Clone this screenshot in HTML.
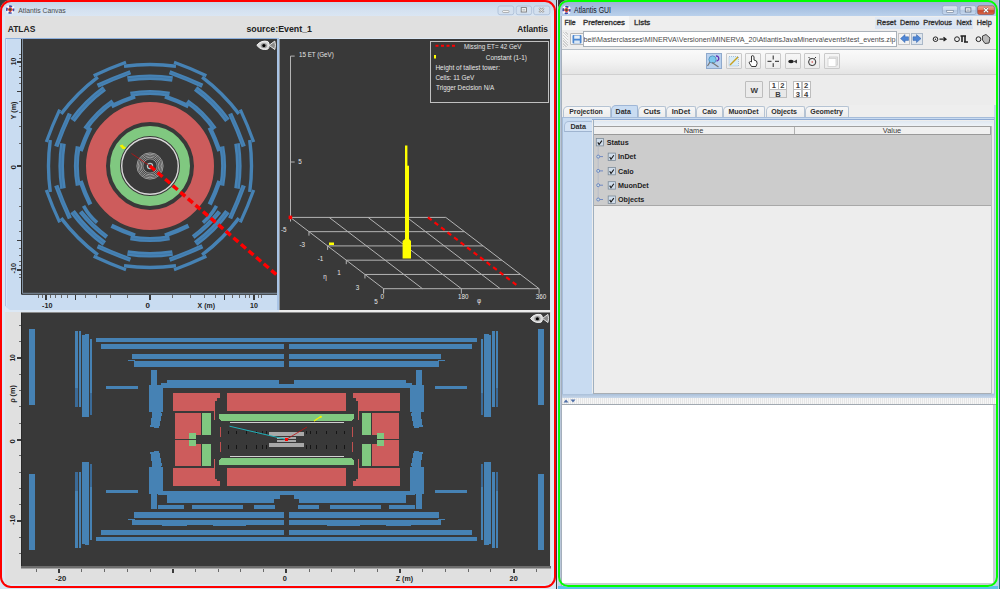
<!DOCTYPE html>
<html><head><meta charset="utf-8">
<style>
html,body{margin:0;padding:0;}
body{width:1000px;height:589px;position:relative;overflow:hidden;background:#3a3a3a;font-family:"Liberation Sans",sans-serif;}
.a{position:absolute;box-sizing:border-box;}
svg{position:absolute;left:0;top:0;overflow:visible;}
text{font-family:"Liberation Sans",sans-serif;}
</style></head><body>
<div class="a" style="left:0;top:570px;width:556px;height:19px;background:#d6e6f4"></div>
<div class="a" style="left:540px;top:0;width:16px;height:14px;background:#c4d4e6"></div>
<div class="a" style="left:557px;top:570px;width:25px;height:19px;background:#c4d2e6"></div>
<div class="a" style="left:980px;top:570px;width:18px;height:19px;background:#b8d0ee"></div>
<div class="a" style="left:982px;top:0;width:16px;height:14px;background:#b4c2d4"></div>
<div class="a" style="left:558px;top:586px;width:442px;height:3px;background:#5cc4e8"></div>
<div class="a" style="left:998px;top:0;width:1px;height:589px;background:#b8d0ee"></div><div class="a" style="left:999px;top:0;width:1px;height:589px;background:#226c7c"></div><div class="a" style="left:557px;top:0;width:1px;height:589px;background:#dcdcf2"></div>
<div class="a" style="left:0;top:0;width:556px;height:588px;border-radius:11px;background:linear-gradient(#c2d2e6,#d4e1f0 10px,#dae6f3 16px,#dce8f5 17px);"></div>
<div class="a" style="left:0;top:0;width:556px;height:588px;border:2px solid #ff0000;border-radius:11px;"></div>
<svg width="556" height="20">
<g transform="translate(10.2 9.6)"><circle r="4.6" fill="#f6f8fc"/><circle r="3.4" fill="none" stroke="#3a48a8" stroke-width="1.7" stroke-dasharray="3.2 2.14" stroke-dashoffset="1.6"/><path d="M0 -2.8 L2.8 0 L0 2.8 L-2.8 0 Z" fill="#e23a3a"/><circle r="1.1" fill="#146a3c"/></g>
<text x="18.2" y="12.9" font-size="7.9" fill="#4c4c4c" text-anchor="start" textLength="47.6" lengthAdjust="spacingAndGlyphs">Atlantis Canvas</text>
<rect x="498" y="6" width="15.8" height="8.7" rx="2" fill="#d3e0ef" stroke="#aabdd5" stroke-width="0.8"/>
<rect x="516.2" y="6" width="15.4" height="8.7" rx="2" fill="#d3e0ef" stroke="#aabdd5" stroke-width="0.8"/>
<rect x="533.7" y="6" width="16.1" height="8.7" rx="2" fill="#d3e0ef" stroke="#aabdd5" stroke-width="0.8"/>
<rect x="502.6" y="10.6" width="6.4" height="1.9" rx="0.8" fill="#fafafa" stroke="#8a8a8a" stroke-width="0.6"/>
<rect x="521.2" y="7.6" width="5.2" height="4.4" fill="#f8f8f8" stroke="#7a7a7a" stroke-width="0.9"/>
<rect x="522.4" y="9.4" width="2.8" height="1" fill="#9aa"/>
<path d="M539.2 8 L543.8 12.4 M543.8 8 L539.2 12.4" stroke="#8a8a8a" stroke-width="2"/>
<path d="M539.2 8 L543.8 12.4 M543.8 8 L539.2 12.4" stroke="#f4f4f4" stroke-width="1"/>
</svg>
<div class="a" style="left:5px;top:16px;width:545.6px;height:22px;background:#e0e0e0"></div>
<div class="a" style="left:5px;top:38px;width:274px;height:272.3px;background:#c9dcf1;clip-path:polygon(0 0,100% 0,100% 100%,5px 100%,0 calc(100% - 4px))"></div>
<div class="a" style="left:5px;top:38px;width:274px;height:1px;background:#8eb0dc"></div>
<div class="a" style="left:5px;top:38px;width:1px;height:268px;background:#adbde0"></div>
<div class="a" style="left:6px;top:39px;width:1px;height:267px;background:#d6e6f8"></div>
<div class="a" style="left:277px;top:38px;width:2px;height:272px;background:#a9c4e6"></div>
<div class="a" style="left:279px;top:310px;width:271.6px;height:2.3px;background:#ececec"></div>
<div class="a" style="left:5px;top:312px;width:545.6px;height:271.5px;background:#e0e0e0"></div>
<svg width="556" height="40">
<text x="7.7" y="32" font-size="9.2" fill="#222" font-weight="bold" text-anchor="start" textLength="27.6" lengthAdjust="spacingAndGlyphs">ATLAS</text>
<text x="246.4" y="32" font-size="9.2" fill="#222" font-weight="bold" text-anchor="start" textLength="65.6" lengthAdjust="spacingAndGlyphs">source:Event_1</text>
<text x="548" y="32" font-size="9.2" fill="#222" font-weight="bold" text-anchor="end" textLength="30.7" lengthAdjust="spacingAndGlyphs">Atlantis</text>
</svg>
<svg width="556" height="589" style="left:0;top:0">
<defs><clipPath id="c1"><rect x="22" y="39" width="255" height="255"/></clipPath></defs>
<rect x="22" y="39" width="255" height="255" fill="#393939"/>
<g clip-path="url(#c1)">
<path d="M249.7 140 A188.68 188.68 0 0 1 249.7 192" fill="none" stroke="#4682b4" stroke-width="3.4"/>
<path d="M240.31 109.65 A383.01 383.01 0 0 1 253.7 141.99" fill="none" stroke="#4682b4" stroke-width="3.2"/>
<path d="M202.11 77.12 A188.68 188.68 0 0 1 238.88 113.89" fill="none" stroke="#4682b4" stroke-width="3.4"/>
<path d="M174.01 62.3 A383.01 383.01 0 0 1 206.35 75.69" fill="none" stroke="#4682b4" stroke-width="3.2"/>
<path d="M124 66.3 A188.68 188.68 0 0 1 176 66.3" fill="none" stroke="#4682b4" stroke-width="3.4"/>
<path d="M93.65 75.69 A383.01 383.01 0 0 1 125.99 62.3" fill="none" stroke="#4682b4" stroke-width="3.2"/>
<path d="M61.12 113.89 A188.68 188.68 0 0 1 97.89 77.12" fill="none" stroke="#4682b4" stroke-width="3.4"/>
<path d="M46.3 141.99 A383.01 383.01 0 0 1 59.69 109.65" fill="none" stroke="#4682b4" stroke-width="3.2"/>
<path d="M50.3 192 A188.68 188.68 0 0 1 50.3 140" fill="none" stroke="#4682b4" stroke-width="3.4"/>
<path d="M59.69 222.35 A383.01 383.01 0 0 1 46.3 190.01" fill="none" stroke="#4682b4" stroke-width="3.2"/>
<path d="M97.89 254.88 A188.68 188.68 0 0 1 61.12 218.11" fill="none" stroke="#4682b4" stroke-width="3.4"/>
<path d="M125.99 269.7 A383.01 383.01 0 0 1 93.65 256.31" fill="none" stroke="#4682b4" stroke-width="3.2"/>
<path d="M176 265.7 A188.68 188.68 0 0 1 124 265.7" fill="none" stroke="#4682b4" stroke-width="3.4"/>
<path d="M206.35 256.31 A383.01 383.01 0 0 1 174.01 269.7" fill="none" stroke="#4682b4" stroke-width="3.2"/>
<path d="M238.88 218.11 A188.68 188.68 0 0 1 202.11 254.88" fill="none" stroke="#4682b4" stroke-width="3.4"/>
<path d="M253.7 190.01 A383.01 383.01 0 0 1 240.31 222.35" fill="none" stroke="#4682b4" stroke-width="3.2"/>
<path d="M237 143.5 A141.53 141.53 0 0 1 237 188.5" fill="none" stroke="#4682b4" stroke-width="5.6"/>
<path d="M237.2 143.5 A141.53 141.53 0 0 1 237.2 188.5" fill="none" stroke="#3a6a98" stroke-width="0.5"/>
<path d="M230.14 113.59 A394.03 394.03 0 0 1 243.73 146.39" fill="none" stroke="#4682b4" stroke-width="4.4"/>
<path d="M230.14 113.59 A394.03 394.03 0 0 1 243.73 146.39" fill="none" stroke="#3d6d9b" stroke-width="0.4"/>
<path d="M195.61 88.57 A141.53 141.53 0 0 1 227.43 120.39" fill="none" stroke="#4682b4" stroke-width="5.6"/>
<path d="M195.75 88.43 A141.53 141.53 0 0 1 227.57 120.25" fill="none" stroke="#3a6a98" stroke-width="0.5"/>
<path d="M169.61 72.27 A394.03 394.03 0 0 1 202.41 85.86" fill="none" stroke="#4682b4" stroke-width="4.4"/>
<path d="M169.61 72.27 A394.03 394.03 0 0 1 202.41 85.86" fill="none" stroke="#3d6d9b" stroke-width="0.4"/>
<path d="M127.5 79 A141.53 141.53 0 0 1 172.5 79" fill="none" stroke="#4682b4" stroke-width="5.6"/>
<path d="M127.5 78.8 A141.53 141.53 0 0 1 172.5 78.8" fill="none" stroke="#3a6a98" stroke-width="0.5"/>
<path d="M97.59 85.86 A394.03 394.03 0 0 1 130.39 72.27" fill="none" stroke="#4682b4" stroke-width="4.4"/>
<path d="M97.59 85.86 A394.03 394.03 0 0 1 130.39 72.27" fill="none" stroke="#3d6d9b" stroke-width="0.4"/>
<path d="M72.57 120.39 A141.53 141.53 0 0 1 104.39 88.57" fill="none" stroke="#4682b4" stroke-width="5.6"/>
<path d="M72.43 120.25 A141.53 141.53 0 0 1 104.25 88.43" fill="none" stroke="#3a6a98" stroke-width="0.5"/>
<path d="M56.27 146.39 A394.03 394.03 0 0 1 69.86 113.59" fill="none" stroke="#4682b4" stroke-width="4.4"/>
<path d="M56.27 146.39 A394.03 394.03 0 0 1 69.86 113.59" fill="none" stroke="#3d6d9b" stroke-width="0.4"/>
<path d="M63 188.5 A141.53 141.53 0 0 1 63 143.5" fill="none" stroke="#4682b4" stroke-width="5.6"/>
<path d="M62.8 188.5 A141.53 141.53 0 0 1 62.8 143.5" fill="none" stroke="#3a6a98" stroke-width="0.5"/>
<path d="M69.86 218.41 A394.03 394.03 0 0 1 56.27 185.61" fill="none" stroke="#4682b4" stroke-width="4.4"/>
<path d="M69.86 218.41 A394.03 394.03 0 0 1 56.27 185.61" fill="none" stroke="#3d6d9b" stroke-width="0.4"/>
<path d="M104.39 243.43 A141.53 141.53 0 0 1 72.57 211.61" fill="none" stroke="#4682b4" stroke-width="5.6"/>
<path d="M104.25 243.57 A141.53 141.53 0 0 1 72.43 211.75" fill="none" stroke="#3a6a98" stroke-width="0.5"/>
<path d="M130.39 259.73 A394.03 394.03 0 0 1 97.59 246.14" fill="none" stroke="#4682b4" stroke-width="4.4"/>
<path d="M130.39 259.73 A394.03 394.03 0 0 1 97.59 246.14" fill="none" stroke="#3d6d9b" stroke-width="0.4"/>
<path d="M172.5 253 A141.53 141.53 0 0 1 127.5 253" fill="none" stroke="#4682b4" stroke-width="5.6"/>
<path d="M172.5 253.2 A141.53 141.53 0 0 1 127.5 253.2" fill="none" stroke="#3a6a98" stroke-width="0.5"/>
<path d="M202.41 246.14 A394.03 394.03 0 0 1 169.61 259.73" fill="none" stroke="#4682b4" stroke-width="4.4"/>
<path d="M202.41 246.14 A394.03 394.03 0 0 1 169.61 259.73" fill="none" stroke="#3d6d9b" stroke-width="0.4"/>
<path d="M227.43 211.61 A141.53 141.53 0 0 1 195.61 243.43" fill="none" stroke="#4682b4" stroke-width="5.6"/>
<path d="M227.57 211.75 A141.53 141.53 0 0 1 195.75 243.57" fill="none" stroke="#3a6a98" stroke-width="0.5"/>
<path d="M243.73 185.61 A394.03 394.03 0 0 1 230.14 218.41" fill="none" stroke="#4682b4" stroke-width="4.4"/>
<path d="M243.73 185.61 A394.03 394.03 0 0 1 230.14 218.41" fill="none" stroke="#3d6d9b" stroke-width="0.4"/>
<path d="M221.8 146.5 A106.53 106.53 0 0 1 221.8 185.5" fill="none" stroke="#4682b4" stroke-width="5"/>
<path d="M221.9 146.5 A106.53 106.53 0 0 1 221.9 185.5" fill="none" stroke="#3d6d9b" stroke-width="0.4"/>
<path d="M209.7 127.47 A203.4 203.4 0 0 1 219.46 151.03" fill="none" stroke="#4682b4" stroke-width="4.4"/>
<path d="M186.98 101.44 A106.53 106.53 0 0 1 214.56 129.02" fill="none" stroke="#4682b4" stroke-width="5"/>
<path d="M187.05 101.37 A106.53 106.53 0 0 1 214.63 128.95" fill="none" stroke="#3d6d9b" stroke-width="0.4"/>
<path d="M164.97 96.54 A203.4 203.4 0 0 1 188.53 106.3" fill="none" stroke="#4682b4" stroke-width="4.4"/>
<path d="M130.5 94.2 A106.53 106.53 0 0 1 169.5 94.2" fill="none" stroke="#4682b4" stroke-width="5"/>
<path d="M130.5 94.1 A106.53 106.53 0 0 1 169.5 94.1" fill="none" stroke="#3d6d9b" stroke-width="0.4"/>
<path d="M111.47 106.3 A203.4 203.4 0 0 1 135.03 96.54" fill="none" stroke="#4682b4" stroke-width="4.4"/>
<path d="M85.44 129.02 A106.53 106.53 0 0 1 113.02 101.44" fill="none" stroke="#4682b4" stroke-width="5"/>
<path d="M85.37 128.95 A106.53 106.53 0 0 1 112.95 101.37" fill="none" stroke="#3d6d9b" stroke-width="0.4"/>
<path d="M80.54 151.03 A203.4 203.4 0 0 1 90.3 127.47" fill="none" stroke="#4682b4" stroke-width="4.4"/>
<path d="M78.2 185.5 A106.53 106.53 0 0 1 78.2 146.5" fill="none" stroke="#4682b4" stroke-width="5"/>
<path d="M78.1 185.5 A106.53 106.53 0 0 1 78.1 146.5" fill="none" stroke="#3d6d9b" stroke-width="0.4"/>
<path d="M90.3 204.53 A203.4 203.4 0 0 1 80.54 180.97" fill="none" stroke="#4682b4" stroke-width="4.4"/>
<path d="M97.08 222.69 A58.28 58.28 0 0 1 83.55 205.98" fill="none" stroke="#4682b4" stroke-width="3.6"/>
<path d="M106.86 236.94 A139.38 139.38 0 0 1 80.6 211.59" fill="none" stroke="#4682b4" stroke-width="4.4"/>
<path d="M106.79 237.02 A139.38 139.38 0 0 1 80.54 211.66" fill="none" stroke="#3d6d9b" stroke-width="0.4"/>
<path d="M135.03 235.46 A203.4 203.4 0 0 1 111.47 225.7" fill="none" stroke="#4682b4" stroke-width="4.4"/>
<path d="M169.5 237.8 A106.53 106.53 0 0 1 130.5 237.8" fill="none" stroke="#4682b4" stroke-width="5"/>
<path d="M169.5 237.9 A106.53 106.53 0 0 1 130.5 237.9" fill="none" stroke="#3d6d9b" stroke-width="0.4"/>
<path d="M188.53 225.7 A203.4 203.4 0 0 1 164.97 235.46" fill="none" stroke="#4682b4" stroke-width="4.4"/>
<path d="M216.45 205.98 A58.28 58.28 0 0 1 202.92 222.69" fill="none" stroke="#4682b4" stroke-width="3.6"/>
<path d="M219.4 211.59 A139.38 139.38 0 0 1 193.14 236.94" fill="none" stroke="#4682b4" stroke-width="4.4"/>
<path d="M219.46 211.66 A139.38 139.38 0 0 1 193.21 237.02" fill="none" stroke="#3d6d9b" stroke-width="0.4"/>
<path d="M219.46 180.97 A203.4 203.4 0 0 1 209.7 204.53" fill="none" stroke="#4682b4" stroke-width="4.4"/>
<circle cx="150" cy="166" r="54" fill="none" stroke="#cd5c5c" stroke-width="20"/>
<circle cx="150" cy="166" r="35" fill="none" stroke="#80c880" stroke-width="10"/>
<circle cx="150" cy="166" r="28.3" fill="none" stroke="#d8d8d8" stroke-width="1.4"/>
<circle cx="150" cy="166" r="7.2" fill="none" stroke="#bdbdbd" stroke-width="0.75"/>
<circle cx="150" cy="166" r="8.8" fill="none" stroke="#bdbdbd" stroke-width="0.75"/>
<circle cx="150" cy="166" r="10.3" fill="none" stroke="#bdbdbd" stroke-width="0.75"/>
<circle cx="150" cy="166" r="11.8" fill="none" stroke="#bdbdbd" stroke-width="0.75"/>
<circle cx="150" cy="166" r="13.1" fill="none" stroke="#bdbdbd" stroke-width="0.75"/>
<circle cx="150" cy="166" r="2.6" fill="none" stroke="#b8c8c8" stroke-width="1.2"/>
<line x1="150" y1="166" x2="131.5" y2="153.5" stroke="#c01010" stroke-width="0.8"/>
<path d="M119.5 145.5 l3 -1 l1.5 2 l2 0.5 l-1 2 l-2.5 0 z" fill="#f0f000"/>
<line x1="150" y1="166" x2="282.71" y2="280.08" stroke="#ff0000" stroke-width="3.5" stroke-dasharray="6.5 3.5"/>
</g><defs><clipPath id="c2"><rect x="279.5" y="39" width="270.5" height="271"/></clipPath></defs>
<rect x="279.5" y="39" width="270.5" height="271" fill="#393939"/>
<g clip-path="url(#c2)">
<line x1="290.3" y1="217.4" x2="445.8" y2="217.4" stroke="#b4b4b4" stroke-width="1"/>
<line x1="308.96" y1="231.66" x2="464.46" y2="231.66" stroke="#b4b4b4" stroke-width="1"/>
<line x1="327.62" y1="245.92" x2="483.12" y2="245.92" stroke="#b4b4b4" stroke-width="1"/>
<line x1="346.28" y1="260.18" x2="501.78" y2="260.18" stroke="#b4b4b4" stroke-width="1"/>
<line x1="364.94" y1="274.44" x2="520.44" y2="274.44" stroke="#b4b4b4" stroke-width="1"/>
<line x1="383.6" y1="288.7" x2="539.1" y2="288.7" stroke="#b4b4b4" stroke-width="1"/>
<line x1="290.3" y1="217.4" x2="383.6" y2="288.7" stroke="#b4b4b4" stroke-width="1"/>
<line x1="329.18" y1="217.4" x2="422.48" y2="288.7" stroke="#b4b4b4" stroke-width="1"/>
<line x1="368.05" y1="217.4" x2="461.35" y2="288.7" stroke="#b4b4b4" stroke-width="1"/>
<line x1="406.93" y1="217.4" x2="500.23" y2="288.7" stroke="#b4b4b4" stroke-width="1"/>
<line x1="445.8" y1="217.4" x2="539.1" y2="288.7" stroke="#b4b4b4" stroke-width="1"/>
<line x1="308.96" y1="231.66" x2="308.96" y2="235.66" stroke="#b4b4b4" stroke-width="1"/>
<line x1="327.62" y1="245.92" x2="327.62" y2="249.92" stroke="#b4b4b4" stroke-width="1"/>
<line x1="346.28" y1="260.18" x2="346.28" y2="264.18" stroke="#b4b4b4" stroke-width="1"/>
<line x1="364.94" y1="274.44" x2="364.94" y2="278.44" stroke="#b4b4b4" stroke-width="1"/>
<line x1="383.6" y1="288.7" x2="383.6" y2="292.7" stroke="#b4b4b4" stroke-width="1"/>
<line x1="383.6" y1="288.7" x2="383.6" y2="293.7" stroke="#b4b4b4" stroke-width="1"/>
<line x1="461.35" y1="288.7" x2="461.35" y2="293.7" stroke="#b4b4b4" stroke-width="1"/>
<line x1="539.1" y1="288.7" x2="539.1" y2="293.7" stroke="#b4b4b4" stroke-width="1"/>
<polyline points="290.5,217.4 290.5,56.1 294.7,56.1" fill="none" stroke="#b4b4b4" stroke-width="1"/>
<line x1="290.5" y1="162" x2="294.7" y2="162" stroke="#b4b4b4" stroke-width="1"/>
<line x1="290.5" y1="217.4" x2="290.5" y2="221.5" stroke="#b4b4b4" stroke-width="1"/>
<rect x="288.6" y="215.6" width="3.6" height="3.6" fill="#ff0000"/>
<line x1="428" y1="217.4" x2="517.6" y2="285.9" stroke="#ff0000" stroke-width="2.2" stroke-dasharray="4.6 3.6"/>
<rect x="405" y="145.5" width="2.4" height="100" fill="#ffff00"/>
<rect x="405" y="165.7" width="4" height="80" fill="#ffff00"/>
<path d="M402.6 258.6 L402.6 241 L405 239 L409 239 L411 241 L411 258.6 Z" fill="#ffff00"/>
<rect x="329" y="242.5" width="5" height="2.5" fill="#ffff00"/>
<rect x="430.5" y="41.5" width="118" height="61" fill="none" stroke="#c0c0c0" stroke-width="1"/>
<line x1="435.5" y1="45.8" x2="457" y2="45.8" stroke="#ff0000" stroke-width="2" stroke-dasharray="3 2.5"/>
<rect x="434" y="55" width="2" height="3.5" fill="#ffff00"/>
<text x="299" y="57" font-size="7" fill="#e6e6e6" text-anchor="start" textLength="34.8" lengthAdjust="spacingAndGlyphs">15 ET (GeV)</text>
<text x="298.3" y="163.5" font-size="6.3" fill="#e6e6e6" text-anchor="start">5</text>
<text x="435.4" y="49" font-size="7" fill="#e6e6e6" text-anchor="start"></text>
<text x="464" y="49.2" font-size="7" fill="#e6e6e6" text-anchor="start" textLength="57.5" lengthAdjust="spacingAndGlyphs">Missing ET= 42 GeV</text>
<text x="485.8" y="59.7" font-size="7" fill="#e6e6e6" text-anchor="start" textLength="41.2" lengthAdjust="spacingAndGlyphs">Constant (1-1)</text>
<text x="435.4" y="70" font-size="7" fill="#e6e6e6" text-anchor="start" textLength="64.6" lengthAdjust="spacingAndGlyphs">Height of tallest tower:</text>
<text x="435.4" y="79.8" font-size="7" fill="#e6e6e6" text-anchor="start" textLength="39" lengthAdjust="spacingAndGlyphs">Cells: 11 GeV</text>
<text x="436" y="90.2" font-size="7" fill="#e6e6e6" text-anchor="start" textLength="58.2" lengthAdjust="spacingAndGlyphs">Trigger Decision N/A</text>
<text x="283.8" y="232.3" font-size="6.3" fill="#e6e6e6" text-anchor="middle">-5</text>
<text x="302.3" y="246.5" font-size="6.3" fill="#e6e6e6" text-anchor="middle">-3</text>
<text x="320.5" y="261" font-size="6.3" fill="#e6e6e6" text-anchor="middle">-1</text>
<text x="339" y="275.2" font-size="6.3" fill="#e6e6e6" text-anchor="middle">1</text>
<text x="357.5" y="289.5" font-size="6.3" fill="#e6e6e6" text-anchor="middle">3</text>
<text x="376" y="303.5" font-size="6.3" fill="#e6e6e6" text-anchor="middle">5</text>
<text x="325" y="279.3" font-size="6.3" fill="#e6e6e6" text-anchor="middle">η</text>
<text x="382.2" y="299.3" font-size="6.3" fill="#e6e6e6" text-anchor="middle">0</text>
<text x="463.3" y="299.3" font-size="6.3" fill="#e6e6e6" text-anchor="middle">180</text>
<text x="541" y="299.3" font-size="6.3" fill="#e6e6e6" text-anchor="middle">360</text>
<text x="479" y="303.3" font-size="6.3" fill="#e6e6e6" text-anchor="middle">φ</text>
</g><defs><clipPath id="c3"><rect x="22" y="312.5" width="528" height="253.5"/></clipPath></defs>
<rect x="22" y="312.5" width="528" height="253.5" fill="#393939"/>
<g clip-path="url(#c3)" shape-rendering="crispEdges">
<g><rect x="29.3" y="329.2" width="5.7" height="75.9" fill="#4682b4"/>
<rect x="75" y="331.4" width="2.5" height="56.6" fill="#4682b4"/>
<rect x="75" y="388" width="2.5" height="18.9" fill="#3b6b98"/>
<rect x="78.5" y="331.4" width="2.5" height="75.9" fill="#4682b4"/>
<path d="M81.8 335 L84.5 335 L84.5 333.6 L88.9 333.6 L88.9 416.8 L81.8 416.8 Z" fill="#4682b4"/>
<rect x="89.7" y="338.9" width="2.7" height="53.6" fill="#4682b4"/>
<rect x="89.7" y="392.5" width="2.7" height="22.8" fill="#3b6b98"/>
<rect x="101" y="344.3" width="182.8" height="4.4" fill="#4682b4"/>
<rect x="131.8" y="354.4" width="152" height="4.4" fill="#4682b4"/>
<rect x="162" y="353.5" width="25.4" height="1.5" fill="#4682b4"/>
<rect x="212.8" y="353.5" width="33.1" height="1.5" fill="#4682b4"/>
<rect x="128" y="359.5" width="7" height="1" fill="#4682b4"/>
<rect x="134" y="361" width="149.8" height="5.9" fill="#4682b4"/>
<rect x="106.1" y="386.4" width="31.5" height="2.2" fill="#4682b4"/>
<rect x="150.6" y="370.2" width="6.8" height="15.4" fill="#4682b4"/>
<rect x="149.2" y="385.2" width="13.6" height="26.5" fill="#4682b4"/>
<path d="M162.1 412.6 L152.6 411.2 L150.3 426.5 L159 428.6 Z" fill="#4682b4"/>
<path d="M173 393 L219.6 393 L219.6 398 L216.6 398 L216.6 400.5 L215 400.5 L215 411 L173 411 Z" fill="#cd5c5c"/>
<path d="M174.5 413.1 L201.3 413.1 L201.3 435.4 L196 435.4 L196 439 L174.5 439 Z" fill="#cd5c5c"/>
<rect x="213.8" y="411" width="1.2" height="9" fill="#cd5c5c"/>
<rect x="202" y="413" width="9.2" height="22.4" fill="#80c880"/>
<rect x="189" y="432.7" width="7" height="6.3" fill="#80c880"/>
<rect x="228" y="430.5" width="1.2" height="3.5" fill="#151515"/>
<rect x="236" y="430.5" width="1.2" height="3.5" fill="#151515"/>
<rect x="246" y="430.5" width="1.2" height="3.5" fill="#151515"/>
<rect x="256" y="430.5" width="1.2" height="3.5" fill="#151515"/>
<rect x="262" y="430.5" width="1.2" height="3.5" fill="#151515"/>
<rect x="266" y="430.5" width="1.2" height="3.5" fill="#151515"/>
<rect x="220" y="427" width="1" height="10" fill="#c05050"/></g>
<g transform="translate(573 0) scale(-1 1)"><rect x="29.3" y="329.2" width="5.7" height="75.9" fill="#4682b4"/>
<rect x="75" y="331.4" width="2.5" height="56.6" fill="#4682b4"/>
<rect x="75" y="388" width="2.5" height="18.9" fill="#3b6b98"/>
<rect x="78.5" y="331.4" width="2.5" height="75.9" fill="#4682b4"/>
<path d="M81.8 335 L84.5 335 L84.5 333.6 L88.9 333.6 L88.9 416.8 L81.8 416.8 Z" fill="#4682b4"/>
<rect x="89.7" y="338.9" width="2.7" height="53.6" fill="#4682b4"/>
<rect x="89.7" y="392.5" width="2.7" height="22.8" fill="#3b6b98"/>
<rect x="101" y="344.3" width="182.8" height="4.4" fill="#4682b4"/>
<rect x="131.8" y="354.4" width="152" height="4.4" fill="#4682b4"/>
<rect x="162" y="353.5" width="25.4" height="1.5" fill="#4682b4"/>
<rect x="212.8" y="353.5" width="33.1" height="1.5" fill="#4682b4"/>
<rect x="128" y="359.5" width="7" height="1" fill="#4682b4"/>
<rect x="134" y="361" width="149.8" height="5.9" fill="#4682b4"/>
<rect x="106.1" y="386.4" width="31.5" height="2.2" fill="#4682b4"/>
<rect x="150.6" y="370.2" width="6.8" height="15.4" fill="#4682b4"/>
<rect x="149.2" y="385.2" width="13.6" height="26.5" fill="#4682b4"/>
<path d="M162.1 412.6 L152.6 411.2 L150.3 426.5 L159 428.6 Z" fill="#4682b4"/>
<path d="M173 393 L219.6 393 L219.6 398 L216.6 398 L216.6 400.5 L215 400.5 L215 411 L173 411 Z" fill="#cd5c5c"/>
<path d="M174.5 413.1 L201.3 413.1 L201.3 435.4 L196 435.4 L196 439 L174.5 439 Z" fill="#cd5c5c"/>
<rect x="213.8" y="411" width="1.2" height="9" fill="#cd5c5c"/>
<rect x="202" y="413" width="9.2" height="22.4" fill="#80c880"/>
<rect x="189" y="432.7" width="7" height="6.3" fill="#80c880"/>
<rect x="228" y="430.5" width="1.2" height="3.5" fill="#151515"/>
<rect x="236" y="430.5" width="1.2" height="3.5" fill="#151515"/>
<rect x="246" y="430.5" width="1.2" height="3.5" fill="#151515"/>
<rect x="256" y="430.5" width="1.2" height="3.5" fill="#151515"/>
<rect x="262" y="430.5" width="1.2" height="3.5" fill="#151515"/>
<rect x="266" y="430.5" width="1.2" height="3.5" fill="#151515"/>
<rect x="220" y="427" width="1" height="10" fill="#c05050"/></g>
<g transform="translate(0 879) scale(1 -1)"><rect x="29.3" y="329.2" width="5.7" height="75.9" fill="#4682b4"/>
<rect x="75" y="331.4" width="2.5" height="56.6" fill="#4682b4"/>
<rect x="75" y="388" width="2.5" height="18.9" fill="#3b6b98"/>
<rect x="78.5" y="331.4" width="2.5" height="75.9" fill="#4682b4"/>
<path d="M81.8 335 L84.5 335 L84.5 333.6 L88.9 333.6 L88.9 416.8 L81.8 416.8 Z" fill="#4682b4"/>
<rect x="89.7" y="338.9" width="2.7" height="53.6" fill="#4682b4"/>
<rect x="89.7" y="392.5" width="2.7" height="22.8" fill="#3b6b98"/>
<rect x="101" y="344.3" width="182.8" height="4.4" fill="#4682b4"/>
<rect x="131.8" y="354.4" width="152" height="4.4" fill="#4682b4"/>
<rect x="162" y="353.5" width="25.4" height="1.5" fill="#4682b4"/>
<rect x="212.8" y="353.5" width="33.1" height="1.5" fill="#4682b4"/>
<rect x="128" y="359.5" width="7" height="1" fill="#4682b4"/>
<rect x="134" y="361" width="149.8" height="5.9" fill="#4682b4"/>
<rect x="106.1" y="386.4" width="31.5" height="2.2" fill="#4682b4"/>
<rect x="150.6" y="370.2" width="6.8" height="15.4" fill="#4682b4"/>
<rect x="149.2" y="385.2" width="13.6" height="26.5" fill="#4682b4"/>
<path d="M162.1 412.6 L152.6 411.2 L150.3 426.5 L159 428.6 Z" fill="#4682b4"/>
<path d="M173 393 L219.6 393 L219.6 398 L216.6 398 L216.6 400.5 L215 400.5 L215 411 L173 411 Z" fill="#cd5c5c"/>
<path d="M174.5 413.1 L201.3 413.1 L201.3 435.4 L196 435.4 L196 439 L174.5 439 Z" fill="#cd5c5c"/>
<rect x="213.8" y="411" width="1.2" height="9" fill="#cd5c5c"/>
<rect x="202" y="413" width="9.2" height="22.4" fill="#80c880"/>
<rect x="189" y="432.7" width="7" height="6.3" fill="#80c880"/>
<rect x="228" y="430.5" width="1.2" height="3.5" fill="#151515"/>
<rect x="236" y="430.5" width="1.2" height="3.5" fill="#151515"/>
<rect x="246" y="430.5" width="1.2" height="3.5" fill="#151515"/>
<rect x="256" y="430.5" width="1.2" height="3.5" fill="#151515"/>
<rect x="262" y="430.5" width="1.2" height="3.5" fill="#151515"/>
<rect x="266" y="430.5" width="1.2" height="3.5" fill="#151515"/>
<rect x="220" y="427" width="1" height="10" fill="#c05050"/></g>
<g transform="translate(573 879) scale(-1 -1)"><rect x="29.3" y="329.2" width="5.7" height="75.9" fill="#4682b4"/>
<rect x="75" y="331.4" width="2.5" height="56.6" fill="#4682b4"/>
<rect x="75" y="388" width="2.5" height="18.9" fill="#3b6b98"/>
<rect x="78.5" y="331.4" width="2.5" height="75.9" fill="#4682b4"/>
<path d="M81.8 335 L84.5 335 L84.5 333.6 L88.9 333.6 L88.9 416.8 L81.8 416.8 Z" fill="#4682b4"/>
<rect x="89.7" y="338.9" width="2.7" height="53.6" fill="#4682b4"/>
<rect x="89.7" y="392.5" width="2.7" height="22.8" fill="#3b6b98"/>
<rect x="101" y="344.3" width="182.8" height="4.4" fill="#4682b4"/>
<rect x="131.8" y="354.4" width="152" height="4.4" fill="#4682b4"/>
<rect x="162" y="353.5" width="25.4" height="1.5" fill="#4682b4"/>
<rect x="212.8" y="353.5" width="33.1" height="1.5" fill="#4682b4"/>
<rect x="128" y="359.5" width="7" height="1" fill="#4682b4"/>
<rect x="134" y="361" width="149.8" height="5.9" fill="#4682b4"/>
<rect x="106.1" y="386.4" width="31.5" height="2.2" fill="#4682b4"/>
<rect x="150.6" y="370.2" width="6.8" height="15.4" fill="#4682b4"/>
<rect x="149.2" y="385.2" width="13.6" height="26.5" fill="#4682b4"/>
<path d="M162.1 412.6 L152.6 411.2 L150.3 426.5 L159 428.6 Z" fill="#4682b4"/>
<path d="M173 393 L219.6 393 L219.6 398 L216.6 398 L216.6 400.5 L215 400.5 L215 411 L173 411 Z" fill="#cd5c5c"/>
<path d="M174.5 413.1 L201.3 413.1 L201.3 435.4 L196 435.4 L196 439 L174.5 439 Z" fill="#cd5c5c"/>
<rect x="213.8" y="411" width="1.2" height="9" fill="#cd5c5c"/>
<rect x="202" y="413" width="9.2" height="22.4" fill="#80c880"/>
<rect x="189" y="432.7" width="7" height="6.3" fill="#80c880"/>
<rect x="228" y="430.5" width="1.2" height="3.5" fill="#151515"/>
<rect x="236" y="430.5" width="1.2" height="3.5" fill="#151515"/>
<rect x="246" y="430.5" width="1.2" height="3.5" fill="#151515"/>
<rect x="256" y="430.5" width="1.2" height="3.5" fill="#151515"/>
<rect x="262" y="430.5" width="1.2" height="3.5" fill="#151515"/>
<rect x="266" y="430.5" width="1.2" height="3.5" fill="#151515"/>
<rect x="220" y="427" width="1" height="10" fill="#c05050"/></g>
<g><rect x="96.1" y="337.9" width="380.8" height="4" fill="#4682b4"/>
<rect x="227" y="393" width="119" height="18" fill="#cd5c5c"/>
<path d="M218.8 414 L354.2 414 L354.2 418.2 L351.5 420.7 L221.5 420.7 L218.8 418.2 Z" fill="#80c880"/>
<rect x="229.5" y="422.2" width="114" height="1.1" fill="#d0d0d0"/>
<rect x="269.3" y="431.9" width="34.4" height="3.8" fill="#a8a8a8"/>
<rect x="277" y="437.2" width="19" height="1.4" fill="#a8a8a8"/></g>
<g transform="translate(0 879) scale(1 -1)"><rect x="96.1" y="337.9" width="380.8" height="4" fill="#4682b4"/>
<rect x="227" y="393" width="119" height="18" fill="#cd5c5c"/>
<path d="M218.8 414 L354.2 414 L354.2 418.2 L351.5 420.7 L221.5 420.7 L218.8 418.2 Z" fill="#80c880"/>
<rect x="229.5" y="422.2" width="114" height="1.1" fill="#d0d0d0"/>
<rect x="269.3" y="431.9" width="34.4" height="3.8" fill="#a8a8a8"/>
<rect x="277" y="437.2" width="19" height="1.4" fill="#a8a8a8"/></g>
<path d="M167 380.2 L278.7 380.2 L278.7 384 L293.7 384 L293.7 380.2 L405.8 380.2 L405.8 383 L412 383 L412 388.1 L161 388.1 L161 383 L167 383 Z" fill="#4682b4"/>
<path d="M157.7 491 L415.3 491 L415.3 495 L406.2 495 L406.2 503 L298.8 503 L298.8 499.2 L293.6 499.2 L293.6 494.8 L279.6 494.8 L279.6 499.2 L274 499.2 L274 503 L166.8 503 L166.8 495 L157.7 495 Z" fill="#4682b4"/>
<rect x="157.7" y="505.2" width="25.9" height="4.2" fill="#4682b4"/>
<rect x="389.4" y="505.2" width="25.9" height="4.2" fill="#4682b4"/>
<rect x="192" y="505.2" width="51.1" height="4.2" fill="#4682b4"/>
<rect x="329.9" y="505.2" width="51.1" height="4.2" fill="#4682b4"/>
<rect x="254.3" y="505.2" width="20.3" height="4.2" fill="#4682b4"/>
<rect x="298.4" y="505.2" width="20.3" height="4.2" fill="#4682b4"/>
</g><g clip-path="url(#c3)">
<line x1="229.5" y1="426.2" x2="286.5" y2="439.5" stroke="#20b0b8" stroke-width="1"/>
<line x1="287" y1="439" x2="307" y2="427" stroke="#c01010" stroke-width="0.8"/>
<rect x="285" y="438" width="3" height="3" fill="#ff0000"/>
<path d="M314.5 420.8 L318.5 418 L320.6 416.8" fill="none" stroke="#f4f400" stroke-width="1.3" stroke-linecap="round"/><circle cx="320.8" cy="416.8" r="1.1" fill="#f4f400"/>
</g><polyline points="21.5,39 21.5,294.3 277,294.3" fill="none" stroke="#2a2a2a" stroke-width="1"/>
<polyline points="22.5,39 22.5,293.3 277,293.3" fill="none" stroke="#8090a0" stroke-width="1"/>
<line x1="16.5" y1="166" x2="21" y2="166" stroke="#3a3a3a" stroke-width="2" shape-rendering="crispEdges"/>
<line x1="18.7" y1="143.3" x2="21" y2="143.3" stroke="#6a6a6a" stroke-width="1" shape-rendering="crispEdges"/>
<line x1="18.7" y1="188.7" x2="21" y2="188.7" stroke="#6a6a6a" stroke-width="1" shape-rendering="crispEdges"/>
<line x1="18.7" y1="126" x2="21" y2="126" stroke="#6a6a6a" stroke-width="1" shape-rendering="crispEdges"/>
<line x1="18.7" y1="206" x2="21" y2="206" stroke="#6a6a6a" stroke-width="1" shape-rendering="crispEdges"/>
<line x1="18.7" y1="112" x2="21" y2="112" stroke="#6a6a6a" stroke-width="1" shape-rendering="crispEdges"/>
<line x1="18.7" y1="220" x2="21" y2="220" stroke="#6a6a6a" stroke-width="1" shape-rendering="crispEdges"/>
<line x1="18.7" y1="101" x2="21" y2="101" stroke="#6a6a6a" stroke-width="1" shape-rendering="crispEdges"/>
<line x1="18.7" y1="231" x2="21" y2="231" stroke="#6a6a6a" stroke-width="1" shape-rendering="crispEdges"/>
<line x1="16.5" y1="91.5" x2="21" y2="91.5" stroke="#3a3a3a" stroke-width="1.5" shape-rendering="crispEdges"/>
<line x1="16.5" y1="240.5" x2="21" y2="240.5" stroke="#3a3a3a" stroke-width="1.5" shape-rendering="crispEdges"/>
<line x1="18.7" y1="83.5" x2="21" y2="83.5" stroke="#6a6a6a" stroke-width="1" shape-rendering="crispEdges"/>
<line x1="18.7" y1="248.5" x2="21" y2="248.5" stroke="#6a6a6a" stroke-width="1" shape-rendering="crispEdges"/>
<line x1="18.7" y1="77" x2="21" y2="77" stroke="#6a6a6a" stroke-width="1" shape-rendering="crispEdges"/>
<line x1="18.7" y1="255" x2="21" y2="255" stroke="#6a6a6a" stroke-width="1" shape-rendering="crispEdges"/>
<line x1="18.7" y1="71" x2="21" y2="71" stroke="#6a6a6a" stroke-width="1" shape-rendering="crispEdges"/>
<line x1="18.7" y1="261" x2="21" y2="261" stroke="#6a6a6a" stroke-width="1" shape-rendering="crispEdges"/>
<line x1="18.7" y1="66.4" x2="21" y2="66.4" stroke="#6a6a6a" stroke-width="1" shape-rendering="crispEdges"/>
<line x1="18.7" y1="265.6" x2="21" y2="265.6" stroke="#6a6a6a" stroke-width="1" shape-rendering="crispEdges"/>
<line x1="16.5" y1="61.8" x2="21" y2="61.8" stroke="#3a3a3a" stroke-width="1.5" shape-rendering="crispEdges"/>
<line x1="16.5" y1="270.2" x2="21" y2="270.2" stroke="#3a3a3a" stroke-width="1.5" shape-rendering="crispEdges"/>
<line x1="18.7" y1="58" x2="21" y2="58" stroke="#6a6a6a" stroke-width="1" shape-rendering="crispEdges"/>
<line x1="18.7" y1="274" x2="21" y2="274" stroke="#6a6a6a" stroke-width="1" shape-rendering="crispEdges"/>
<line x1="18.7" y1="54.5" x2="21" y2="54.5" stroke="#6a6a6a" stroke-width="1" shape-rendering="crispEdges"/>
<line x1="18.7" y1="277.5" x2="21" y2="277.5" stroke="#6a6a6a" stroke-width="1" shape-rendering="crispEdges"/>
<line x1="150" y1="295" x2="150" y2="299.5" stroke="#3a3a3a" stroke-width="2" shape-rendering="crispEdges"/>
<line x1="127.3" y1="295" x2="127.3" y2="297.8" stroke="#6a6a6a" stroke-width="1" shape-rendering="crispEdges"/>
<line x1="172.7" y1="295" x2="172.7" y2="297.8" stroke="#6a6a6a" stroke-width="1" shape-rendering="crispEdges"/>
<line x1="110" y1="295" x2="110" y2="297.8" stroke="#6a6a6a" stroke-width="1" shape-rendering="crispEdges"/>
<line x1="190" y1="295" x2="190" y2="297.8" stroke="#6a6a6a" stroke-width="1" shape-rendering="crispEdges"/>
<line x1="96" y1="295" x2="96" y2="297.8" stroke="#6a6a6a" stroke-width="1" shape-rendering="crispEdges"/>
<line x1="204" y1="295" x2="204" y2="297.8" stroke="#6a6a6a" stroke-width="1" shape-rendering="crispEdges"/>
<line x1="85" y1="295" x2="85" y2="297.8" stroke="#6a6a6a" stroke-width="1" shape-rendering="crispEdges"/>
<line x1="215" y1="295" x2="215" y2="297.8" stroke="#6a6a6a" stroke-width="1" shape-rendering="crispEdges"/>
<line x1="75.5" y1="295" x2="75.5" y2="299.5" stroke="#3a3a3a" stroke-width="1.5" shape-rendering="crispEdges"/>
<line x1="224.5" y1="295" x2="224.5" y2="299.5" stroke="#3a3a3a" stroke-width="1.5" shape-rendering="crispEdges"/>
<line x1="67.5" y1="295" x2="67.5" y2="297.8" stroke="#6a6a6a" stroke-width="1" shape-rendering="crispEdges"/>
<line x1="232.5" y1="295" x2="232.5" y2="297.8" stroke="#6a6a6a" stroke-width="1" shape-rendering="crispEdges"/>
<line x1="61" y1="295" x2="61" y2="297.8" stroke="#6a6a6a" stroke-width="1" shape-rendering="crispEdges"/>
<line x1="239" y1="295" x2="239" y2="297.8" stroke="#6a6a6a" stroke-width="1" shape-rendering="crispEdges"/>
<line x1="55" y1="295" x2="55" y2="297.8" stroke="#6a6a6a" stroke-width="1" shape-rendering="crispEdges"/>
<line x1="245" y1="295" x2="245" y2="297.8" stroke="#6a6a6a" stroke-width="1" shape-rendering="crispEdges"/>
<line x1="50.4" y1="295" x2="50.4" y2="297.8" stroke="#6a6a6a" stroke-width="1" shape-rendering="crispEdges"/>
<line x1="249.6" y1="295" x2="249.6" y2="297.8" stroke="#6a6a6a" stroke-width="1" shape-rendering="crispEdges"/>
<line x1="45.8" y1="295" x2="45.8" y2="299.5" stroke="#3a3a3a" stroke-width="1.5" shape-rendering="crispEdges"/>
<line x1="254.2" y1="295" x2="254.2" y2="299.5" stroke="#3a3a3a" stroke-width="1.5" shape-rendering="crispEdges"/>
<line x1="42" y1="295" x2="42" y2="297.8" stroke="#6a6a6a" stroke-width="1" shape-rendering="crispEdges"/>
<line x1="258" y1="295" x2="258" y2="297.8" stroke="#6a6a6a" stroke-width="1" shape-rendering="crispEdges"/>
<line x1="38.5" y1="295" x2="38.5" y2="297.8" stroke="#6a6a6a" stroke-width="1" shape-rendering="crispEdges"/>
<line x1="261.5" y1="295" x2="261.5" y2="297.8" stroke="#6a6a6a" stroke-width="1" shape-rendering="crispEdges"/>
<text x="0" y="0" font-size="8" font-weight="bold" fill="#1e1e1e" text-anchor="middle" textLength="7.6" lengthAdjust="spacingAndGlyphs" transform="translate(15.6 61.5) rotate(-90)">10</text>
<text x="0" y="0" font-size="8" font-weight="bold" fill="#1e1e1e" text-anchor="middle" textLength="17.9" lengthAdjust="spacingAndGlyphs" transform="translate(15.6 110.5) rotate(-90)">Y (m)</text>
<text x="0" y="0" font-size="8" font-weight="bold" fill="#1e1e1e" text-anchor="middle" transform="translate(15.6 167.3) rotate(-90)">0</text>
<text x="0" y="0" font-size="8" font-weight="bold" fill="#1e1e1e" text-anchor="middle" textLength="10.4" lengthAdjust="spacingAndGlyphs" transform="translate(15.6 268.3) rotate(-90)">-10</text>
<text x="47.3" y="308" font-size="8" font-weight="bold" fill="#1e1e1e" text-anchor="middle" textLength="10.4" lengthAdjust="spacingAndGlyphs">-10</text>
<g transform="translate(256.3 40.3) scale(1)"><path d="M0.5 5 Q5 -0.5 11.5 1.2 Q13 2.5 12.8 5 Q13 7.5 11.5 8.8 Q5 10.5 0.5 5 Z" fill="#d8d8d8" stroke="#f4f4f4" stroke-width="1"/><ellipse cx="7.6" cy="5.2" rx="3.2" ry="2.6" fill="#9a9a9a"/><circle cx="7.6" cy="5.3" r="1.6" fill="#000"/><path d="M12.8 5 L18.5 0.8 Q19.8 5 18.5 9.2 Z" fill="#8a8a8a" stroke="#e8e8e8" stroke-width="1"/></g>
<g transform="translate(530 313.6) scale(0.97)"><path d="M0.5 5 Q5 -0.5 11.5 1.2 Q13 2.5 12.8 5 Q13 7.5 11.5 8.8 Q5 10.5 0.5 5 Z" fill="#d8d8d8" stroke="#f4f4f4" stroke-width="1"/><ellipse cx="7.6" cy="5.2" rx="3.2" ry="2.6" fill="#9a9a9a"/><circle cx="7.6" cy="5.3" r="1.6" fill="#000"/><path d="M12.8 5 L18.5 0.8 Q19.8 5 18.5 9.2 Z" fill="#8a8a8a" stroke="#e8e8e8" stroke-width="1"/></g>
<text x="147.8" y="308" font-size="8" font-weight="bold" fill="#1e1e1e" text-anchor="middle">0</text>
<text x="206.3" y="308" font-size="8" font-weight="bold" fill="#1e1e1e" text-anchor="middle" textLength="17.4" lengthAdjust="spacingAndGlyphs">X (m)</text>
<text x="254" y="308" font-size="8" font-weight="bold" fill="#1e1e1e" text-anchor="middle" textLength="7.9" lengthAdjust="spacingAndGlyphs">10</text>
<polyline points="21.5,312.5 21.5,566.5" fill="none" stroke="#2a2a2a" stroke-width="1"/>
<rect x="21" y="566" width="530" height="2.5" fill="#6e6e6e"/>
<line x1="18.8" y1="325.05" x2="21" y2="325.05" stroke="#6a6a6a" stroke-width="1" shape-rendering="crispEdges"/>
<line x1="18.8" y1="341.4" x2="21" y2="341.4" stroke="#6a6a6a" stroke-width="1" shape-rendering="crispEdges"/>
<line x1="16.7" y1="357.75" x2="21" y2="357.75" stroke="#3a3a3a" stroke-width="2" shape-rendering="crispEdges"/>
<line x1="18.8" y1="374.1" x2="21" y2="374.1" stroke="#6a6a6a" stroke-width="1" shape-rendering="crispEdges"/>
<line x1="18.8" y1="390.45" x2="21" y2="390.45" stroke="#6a6a6a" stroke-width="1" shape-rendering="crispEdges"/>
<line x1="18.8" y1="406.8" x2="21" y2="406.8" stroke="#6a6a6a" stroke-width="1" shape-rendering="crispEdges"/>
<line x1="18.8" y1="423.15" x2="21" y2="423.15" stroke="#6a6a6a" stroke-width="1" shape-rendering="crispEdges"/>
<line x1="16.7" y1="439.5" x2="21" y2="439.5" stroke="#3a3a3a" stroke-width="2" shape-rendering="crispEdges"/>
<line x1="18.8" y1="455.85" x2="21" y2="455.85" stroke="#6a6a6a" stroke-width="1" shape-rendering="crispEdges"/>
<line x1="18.8" y1="472.2" x2="21" y2="472.2" stroke="#6a6a6a" stroke-width="1" shape-rendering="crispEdges"/>
<line x1="18.8" y1="488.55" x2="21" y2="488.55" stroke="#6a6a6a" stroke-width="1" shape-rendering="crispEdges"/>
<line x1="18.8" y1="504.9" x2="21" y2="504.9" stroke="#6a6a6a" stroke-width="1" shape-rendering="crispEdges"/>
<line x1="16.7" y1="521.25" x2="21" y2="521.25" stroke="#3a3a3a" stroke-width="2" shape-rendering="crispEdges"/>
<line x1="18.8" y1="537.6" x2="21" y2="537.6" stroke="#6a6a6a" stroke-width="1" shape-rendering="crispEdges"/>
<line x1="18.8" y1="553.95" x2="21" y2="553.95" stroke="#6a6a6a" stroke-width="1" shape-rendering="crispEdges"/>
<line x1="36.48" y1="568.5" x2="36.48" y2="571.5" stroke="#6a6a6a" stroke-width="1" shape-rendering="crispEdges"/>
<line x1="59.2" y1="568.5" x2="59.2" y2="573" stroke="#3a3a3a" stroke-width="2" shape-rendering="crispEdges"/>
<line x1="81.92" y1="568.5" x2="81.92" y2="571.5" stroke="#6a6a6a" stroke-width="1" shape-rendering="crispEdges"/>
<line x1="104.64" y1="568.5" x2="104.64" y2="571.5" stroke="#6a6a6a" stroke-width="1" shape-rendering="crispEdges"/>
<line x1="127.36" y1="568.5" x2="127.36" y2="571.5" stroke="#6a6a6a" stroke-width="1" shape-rendering="crispEdges"/>
<line x1="150.08" y1="568.5" x2="150.08" y2="571.5" stroke="#6a6a6a" stroke-width="1" shape-rendering="crispEdges"/>
<line x1="172.8" y1="568.5" x2="172.8" y2="573" stroke="#3a3a3a" stroke-width="2" shape-rendering="crispEdges"/>
<line x1="195.52" y1="568.5" x2="195.52" y2="571.5" stroke="#6a6a6a" stroke-width="1" shape-rendering="crispEdges"/>
<line x1="218.24" y1="568.5" x2="218.24" y2="571.5" stroke="#6a6a6a" stroke-width="1" shape-rendering="crispEdges"/>
<line x1="240.96" y1="568.5" x2="240.96" y2="571.5" stroke="#6a6a6a" stroke-width="1" shape-rendering="crispEdges"/>
<line x1="263.68" y1="568.5" x2="263.68" y2="571.5" stroke="#6a6a6a" stroke-width="1" shape-rendering="crispEdges"/>
<line x1="286.4" y1="568.5" x2="286.4" y2="573" stroke="#3a3a3a" stroke-width="2" shape-rendering="crispEdges"/>
<line x1="309.12" y1="568.5" x2="309.12" y2="571.5" stroke="#6a6a6a" stroke-width="1" shape-rendering="crispEdges"/>
<line x1="331.84" y1="568.5" x2="331.84" y2="571.5" stroke="#6a6a6a" stroke-width="1" shape-rendering="crispEdges"/>
<line x1="354.56" y1="568.5" x2="354.56" y2="571.5" stroke="#6a6a6a" stroke-width="1" shape-rendering="crispEdges"/>
<line x1="377.28" y1="568.5" x2="377.28" y2="571.5" stroke="#6a6a6a" stroke-width="1" shape-rendering="crispEdges"/>
<line x1="400" y1="568.5" x2="400" y2="573" stroke="#3a3a3a" stroke-width="2" shape-rendering="crispEdges"/>
<line x1="422.72" y1="568.5" x2="422.72" y2="571.5" stroke="#6a6a6a" stroke-width="1" shape-rendering="crispEdges"/>
<line x1="445.44" y1="568.5" x2="445.44" y2="571.5" stroke="#6a6a6a" stroke-width="1" shape-rendering="crispEdges"/>
<line x1="468.16" y1="568.5" x2="468.16" y2="571.5" stroke="#6a6a6a" stroke-width="1" shape-rendering="crispEdges"/>
<line x1="490.88" y1="568.5" x2="490.88" y2="571.5" stroke="#6a6a6a" stroke-width="1" shape-rendering="crispEdges"/>
<line x1="513.6" y1="568.5" x2="513.6" y2="573" stroke="#3a3a3a" stroke-width="2" shape-rendering="crispEdges"/>
<line x1="536.32" y1="568.5" x2="536.32" y2="571.5" stroke="#6a6a6a" stroke-width="1" shape-rendering="crispEdges"/>
<text x="0" y="0" font-size="7.8" font-weight="bold" fill="#1e1e1e" text-anchor="middle" textLength="7.4" lengthAdjust="spacingAndGlyphs" transform="translate(15.2 357.9) rotate(-90)">10</text>
<text x="0" y="0" font-size="7.8" font-weight="bold" fill="#1e1e1e" text-anchor="middle" textLength="17.7" lengthAdjust="spacingAndGlyphs" transform="translate(15.2 394) rotate(-90)">ρ (m)</text>
<text x="0" y="0" font-size="7.8" font-weight="bold" fill="#1e1e1e" text-anchor="middle" transform="translate(15.2 441.3) rotate(-90)">0</text>
<text x="0" y="0" font-size="7.8" font-weight="bold" fill="#1e1e1e" text-anchor="middle" textLength="10" lengthAdjust="spacingAndGlyphs" transform="translate(15.2 519.8) rotate(-90)">-10</text>
<text x="60.8" y="581" font-size="7.4" font-weight="bold" fill="#1e1e1e" text-anchor="middle" textLength="11" lengthAdjust="spacingAndGlyphs">-20</text>
<text x="284.9" y="581" font-size="7.4" font-weight="bold" fill="#1e1e1e" text-anchor="middle">0</text>
<text x="404.4" y="581" font-size="7.4" font-weight="bold" fill="#1e1e1e" text-anchor="middle" textLength="17.2" lengthAdjust="spacingAndGlyphs">Z (m)</text>
<text x="513.7" y="581" font-size="7.4" font-weight="bold" fill="#1e1e1e" text-anchor="middle" textLength="8.2" lengthAdjust="spacingAndGlyphs">20</text></svg>
<div class="a" style="left:558px;top:0px;width:440px;height:586.5px;border-radius:10px;background:#eeeeee;"></div>
<div class="a" style="left:558px;top:0px;width:440px;height:17px;border-radius:10px 10px 0 0;background:linear-gradient(#97b0d4,#a9c2e2 9px,#bad1ec 16px);"></div>
<div class="a" style="left:560px;top:16px;width:2px;height:570px;background:linear-gradient(90deg,#bac6da 0 1.4px,#a4aebc 1.4px)"></div>
<div class="a" style="left:993.5px;top:16px;width:2.5px;height:570px;background:#c6d6ea"></div>
<div class="a" style="left:562px;top:16px;width:434px;height:13.5px;background:#eeeeee;"></div>
<div class="a" style="left:562px;top:16px;width:67px;height:13.5px;background:#f7f7f7;"></div>
<div class="a" style="left:875px;top:17px;width:98px;height:12px;background:linear-gradient(#e2eaf5,#d6e2f1);"></div>
<div class="a" style="left:562px;top:29.5px;width:434px;height:19.5px;background:#ededed;"></div>
<div class="a" style="left:562.5px;top:31.5px;width:5.5px;height:15px;background:repeating-linear-gradient(45deg,#d0d0d0 0 1px,#f4f4f4 1px 2px);"></div>
<div class="a" style="left:570px;top:32.8px;width:13.5px;height:12.5px;border:1px solid #b8b8b8;background:#f4f4f4;border-radius:1px;"></div>
<div class="a" style="left:583px;top:30.6px;width:314px;height:16px;border:1px solid #a8b0b8;background:#ffffff;"></div>
<div class="a" style="left:898px;top:32.6px;width:12px;height:12px;border:1px solid #c4c4c4;background:#f2f2f2;"></div>
<div class="a" style="left:911.2px;top:32.6px;width:12px;height:12px;border:1px solid #aab8c8;background:#dfe6ee;"></div>
<div class="a" style="left:562px;top:48.5px;width:434px;height:1.3px;background:#b8c0c8;"></div>
<div class="a" style="left:562px;top:49.8px;width:434px;height:24.5px;background:linear-gradient(#fafafa,#f2f2f2 50%,#e4e4e4);"></div>
<div class="a" style="left:562px;top:74px;width:434px;height:1px;background:#d0d0d0;"></div>
<div class="a" style="left:706.2px;top:53.2px;width:16px;height:16.3px;border:1px solid #8fa9cc;background:#b9d1ee;"></div>
<div class="a" style="left:725.6px;top:53.3px;width:16px;height:16.2px;border:1px solid #c9c9c9;background:linear-gradient(#f6f6f6,#ececec);border-radius:1px;"></div>
<div class="a" style="left:745.2px;top:53.3px;width:16px;height:16.2px;border:1px solid #c9c9c9;background:linear-gradient(#f6f6f6,#ececec);border-radius:1px;"></div>
<div class="a" style="left:765.2px;top:53.3px;width:16px;height:16.2px;border:1px solid #c9c9c9;background:linear-gradient(#f6f6f6,#ececec);border-radius:1px;"></div>
<div class="a" style="left:784.8px;top:53.3px;width:16px;height:16.2px;border:1px solid #c9c9c9;background:linear-gradient(#f6f6f6,#ececec);border-radius:1px;"></div>
<div class="a" style="left:804.3px;top:53.3px;width:16px;height:16.2px;border:1px solid #c9c9c9;background:linear-gradient(#f6f6f6,#ececec);border-radius:1px;"></div>
<div class="a" style="left:824.1px;top:53.3px;width:16px;height:16.2px;border:1px solid #c9c9c9;background:linear-gradient(#f6f6f6,#ececec);border-radius:1px;"></div>
<div class="a" style="left:562px;top:75px;width:434px;height:30px;background:#ececec;"></div>
<div class="a" style="left:745.2px;top:80.8px;width:18px;height:17.6px;border:1px solid #bdbdbd;background:#ebebeb;border-radius:1px;"></div>
<div class="a" style="left:769.2px;top:80.8px;width:17.6px;height:17.6px;border:1px solid #bdbdbd;background:#e8e8e8;"></div>
<div class="a" style="left:770.2px;top:81.8px;width:7.5px;height:7.4px;background:#ffffff;"></div>
<div class="a" style="left:778.8px;top:81.8px;width:7px;height:7.4px;background:#ffffff;"></div>
<div class="a" style="left:777.7px;top:81.8px;width:1.1px;height:7.4px;background:#bdbdbd;"></div>
<div class="a" style="left:770.2px;top:89.2px;width:15.6px;height:1px;background:#bdbdbd;"></div>
<div class="a" style="left:793.2px;top:80.8px;width:17.6px;height:17.6px;border:1px solid #bdbdbd;background:#bdbdbd;"></div>
<div class="a" style="left:794.2px;top:81.8px;width:7.3px;height:7.4px;background:#ffffff;"></div>
<div class="a" style="left:802.6px;top:81.8px;width:7.3px;height:7.4px;background:#ffffff;"></div>
<div class="a" style="left:794.2px;top:90px;width:7.3px;height:7.4px;background:#ffffff;"></div>
<div class="a" style="left:802.6px;top:90px;width:7.3px;height:7.4px;background:#ffffff;"></div>
<div class="a" style="left:563px;top:105.8px;width:47.5px;height:11.7px;border:1px solid #b5c3d3;border-bottom:none;background:linear-gradient(#f7f7f7,#ececec);border-radius:5px 2px 0 0;"></div>
<div class="a" style="left:610.5px;top:104.5px;width:27.8px;height:14px;border:1px solid #9fb6d6;border-bottom:none;background:#c9dcf2;border-radius:5px 2px 0 0;"></div>
<div class="a" style="left:638.3px;top:105.8px;width:27.3px;height:11.7px;border:1px solid #b5c3d3;border-bottom:none;background:linear-gradient(#f7f7f7,#ececec);border-radius:5px 2px 0 0;"></div>
<div class="a" style="left:665.6px;top:105.8px;width:30.6px;height:11.7px;border:1px solid #b5c3d3;border-bottom:none;background:linear-gradient(#f7f7f7,#ececec);border-radius:5px 2px 0 0;"></div>
<div class="a" style="left:696.2px;top:105.8px;width:27.2px;height:11.7px;border:1px solid #b5c3d3;border-bottom:none;background:linear-gradient(#f7f7f7,#ececec);border-radius:5px 2px 0 0;"></div>
<div class="a" style="left:723.4px;top:105.8px;width:42.1px;height:11.7px;border:1px solid #b5c3d3;border-bottom:none;background:linear-gradient(#f7f7f7,#ececec);border-radius:5px 2px 0 0;"></div>
<div class="a" style="left:765.5px;top:105.8px;width:39px;height:11.7px;border:1px solid #b5c3d3;border-bottom:none;background:linear-gradient(#f7f7f7,#ececec);border-radius:5px 2px 0 0;"></div>
<div class="a" style="left:804.5px;top:105.8px;width:44.1px;height:11.7px;border:1px solid #b5c3d3;border-bottom:none;background:linear-gradient(#f7f7f7,#ececec);border-radius:5px 2px 0 0;"></div>
<div class="a" style="left:562px;top:117px;width:432.5px;height:281px;border:1px solid #a6bcd9;background:#c8dbf1;"></div>
<div class="a" style="left:564px;top:120.5px;width:28.5px;height:11.3px;border:1px solid #a8bdd8;border-bottom:1.5px solid #9fb4d0;background:#d3e2f4;border-radius:5px 2px 0 0;"></div>
<div class="a" style="left:592px;top:119.3px;width:401.5px;height:274px;border-top:1.3px solid #8eaad3;background:#ededed;"></div>
<div class="a" style="left:593px;top:120.6px;width:400px;height:5px;background:linear-gradient(#dfe8f2,#eef2f6);"></div>
<div class="a" style="left:593px;top:125.5px;width:397.5px;height:9.2px;border-top:1px solid #a0a0a0;border-bottom:1px solid #9a9a9a;border-right:1.5px solid #9aa0a6;background:#f0f0f0;"></div>
<div class="a" style="left:794.2px;top:126.5px;width:1px;height:7.5px;background:#b0b0b0;"></div>
<div class="a" style="left:593px;top:134.6px;width:397.5px;height:71.2px;background:#cccccc;border-bottom:1px solid #a8a8a8;"></div>
<div class="a" style="left:593px;top:119.5px;width:1px;height:274px;background:#9fb0c0;"></div>
<div class="a" style="left:990.5px;top:125.5px;width:1px;height:268px;background:#b8bcc0;"></div>
<div class="a" style="left:593px;top:392.5px;width:398px;height:1px;background:#a8aeb4;"></div>
<div class="a" style="left:562px;top:393.5px;width:432.5px;height:4.5px;background:linear-gradient(#a9bfd9,#c9d8ea);"></div>
<div class="a" style="left:562px;top:398px;width:434px;height:6px;background:repeating-linear-gradient(90deg,#e6e6e6 0 1px,#f6f6f6 1px 2px);"></div>
<div class="a" style="left:562px;top:404px;width:434px;height:1px;background:#a0a8b0;"></div>
<div class="a" style="left:562px;top:405px;width:431.5px;height:179.5px;background:#ffffff;"></div>
<div class="a" style="left:992.5px;top:405px;width:2px;height:179.5px;background:#c8cdd4;"></div>
<div class="a" style="left:562px;top:582.5px;width:433px;height:2px;background:#c8cdd4;"></div>
<div class="a" style="left:558px;top:0px;width:440px;height:586.5px;border:2.4px solid #00ff00;border-radius:10px;"></div>
<svg width="1000" height="589">
<g transform="translate(566.5 10)"><circle r="4.6" fill="#f6f8fc"/><circle r="3.4" fill="none" stroke="#3a48a8" stroke-width="1.7" stroke-dasharray="3.2 2.14" stroke-dashoffset="1.6"/><path d="M0 -2.8 L2.8 0 L0 2.8 L-2.8 0 Z" fill="#e23a3a"/><circle r="1.1" fill="#146a3c"/></g>
<text x="574" y="13.2" font-size="8.3" fill="#121a28" text-anchor="start" textLength="37" lengthAdjust="spacingAndGlyphs">Atlantis GUI</text>
<defs><linearGradient id="rg" x1="0" y1="0" x2="0" y2="1"><stop offset="0" stop-color="#eba898"/><stop offset="0.5" stop-color="#e07a62"/><stop offset="0.55" stop-color="#c8472a"/><stop offset="1" stop-color="#d86848"/></linearGradient><linearGradient id="bg2" x1="0" y1="0" x2="0" y2="1"><stop offset="0" stop-color="#dfe8f4"/><stop offset="0.5" stop-color="#c8d8ec"/><stop offset="0.55" stop-color="#b4c8e2"/><stop offset="1" stop-color="#c8daf0"/></linearGradient></defs>
<rect x="942.4" y="5.8" width="15.2" height="8.7" rx="1.8" fill="url(#bg2)" stroke="#8a9cb8" stroke-width="0.6"/>
<rect x="960" y="5.8" width="16" height="8.7" rx="1.8" fill="url(#bg2)" stroke="#8a9cb8" stroke-width="0.6"/>
<rect x="977.6" y="5.8" width="16.8" height="8.7" rx="1.8" fill="url(#rg)" stroke="#7a4a50" stroke-width="0.6"/>
<rect x="946.8" y="10.6" width="6.4" height="1.8" fill="#fafafa" stroke="#5a6a80" stroke-width="0.5"/>
<rect x="965.3" y="7.8" width="5.6" height="4.2" fill="#f4f4f4" stroke="#5a6a80" stroke-width="0.8"/>
<rect x="966.6" y="9.6" width="3" height="1" fill="#8898b0"/>
<path d="M983.8 8 L988.2 12.2 M988.2 8 L983.8 12.2" stroke="#5a3a3a" stroke-width="2"/>
<path d="M983.8 8 L988.2 12.2 M988.2 8 L983.8 12.2" stroke="#ffffff" stroke-width="1.2"/>
<text x="564.5" y="25.1" font-size="7.9" fill="#333" text-anchor="start" textLength="11" lengthAdjust="spacingAndGlyphs" stroke="#333" stroke-width="0.35">File</text>
<text x="583" y="25.1" font-size="7.9" fill="#333" text-anchor="start" textLength="42" lengthAdjust="spacingAndGlyphs" stroke="#333" stroke-width="0.35">Preferences</text>
<text x="634" y="25.1" font-size="7.9" fill="#333" text-anchor="start" textLength="16.3" lengthAdjust="spacingAndGlyphs" stroke="#333" stroke-width="0.35">Lists</text>
<text x="876.8" y="25.1" font-size="7.9" fill="#333" text-anchor="start" textLength="19.2" lengthAdjust="spacingAndGlyphs" stroke="#333" stroke-width="0.35">Reset</text>
<text x="900" y="25.1" font-size="7.9" fill="#333" text-anchor="start" textLength="19.2" lengthAdjust="spacingAndGlyphs" stroke="#333" stroke-width="0.35">Demo</text>
<text x="923.2" y="25.1" font-size="7.9" fill="#333" text-anchor="start" textLength="28.8" lengthAdjust="spacingAndGlyphs" stroke="#333" stroke-width="0.35">Previous</text>
<text x="956.5" y="25.1" font-size="7.9" fill="#333" text-anchor="start" textLength="15" lengthAdjust="spacingAndGlyphs" stroke="#333" stroke-width="0.35">Next</text>
<text x="976.8" y="25.1" font-size="7.9" fill="#333" text-anchor="start" textLength="14.9" lengthAdjust="spacingAndGlyphs" stroke="#333" stroke-width="0.35">Help</text>
<rect x="572.5" y="35" width="9" height="8.5" rx="1" fill="#4a86d0"/>
<rect x="574.2" y="35.5" width="5.6" height="3.2" fill="#e8f0f8"/>
<rect x="574.2" y="40.5" width="5.6" height="3" fill="#dce8f4"/>
<clipPath id="tf"><rect x="584" y="31" width="312" height="15"/></clipPath>
<g clip-path="url(#tf)"><text x="895.5" y="42" font-size="7.2" fill="#4a4a4a" text-anchor="end" textLength="312" lengthAdjust="spacingAndGlyphs">beit\Masterclasses\MINERVA\Versionen\MINERVA_20\AtlantisJavaMinerva\events\test_events.zip</text></g>
<path d="M900.5 38.6 L905 34.6 L905 36.8 L908.5 36.8 L908.5 40.4 L905 40.4 L905 42.6 Z" fill="#4f86d4" stroke="#3060a8" stroke-width="0.5"/>
<path d="M921 38.6 L916.5 34.6 L916.5 36.8 L913 36.8 L913 40.4 L916.5 40.4 L916.5 42.6 Z" fill="#4f86d4" stroke="#3060a8" stroke-width="0.5"/>
<circle cx="935.5" cy="39.2" r="2.3" fill="none" stroke="#222" stroke-width="1"/><circle cx="935.5" cy="39.2" r="0.7" fill="#222"/>
<path d="M939.5 39.2 L945.5 39.2 M943.5 37.3 L946 39.2 L943.5 41.1" fill="none" stroke="#222" stroke-width="1.3"/>
<circle cx="957" cy="39.2" r="2.4" fill="none" stroke="#222" stroke-width="1"/>
<path d="M962 36 L962 42 M960.5 36 L966 36 M965 36 L965 42 M964 42 L968 42" fill="none" stroke="#222" stroke-width="1.6"/>
<circle cx="978.5" cy="39.2" r="2.4" fill="none" stroke="#222" stroke-width="1"/>
<path d="M982.5 36 L986 34.5 L990 38 L989 43 L985 43.5 L982.5 40 Z" fill="#bbb" stroke="#333" stroke-width="0.9"/>
<circle cx="712.5" cy="59.5" r="3.6" fill="#7cc8ee" stroke="#4a8ab8" stroke-width="0.8"/>
<path d="M716 56 A2.5 2.5 0 1 1 716.5 61" fill="none" stroke="#6030b0" stroke-width="1.3"/>
<path d="M710 62 L707.5 66 M712 62.5 L718.5 67" stroke="#777" stroke-width="1.2"/>
<rect x="729" y="56.5" width="9.5" height="9.5" fill="#d8ecf8" stroke="#8ac" stroke-width="0.7" stroke-dasharray="1 1"/>
<path d="M730 65 L738 57" stroke="#c8a020" stroke-width="1.5"/>
<path d="M751.5 56 L751.5 62 M751.5 56 Q753 55 754 56.5 L754 60 L756.5 61 Q758 63 756 66.5 L751.5 66.5 L749 62.5 L750.5 61.5 L751.5 62" fill="#fff" stroke="#222" stroke-width="0.9"/>
<path d="M773.2 55.5 L773.2 59.5 M773.2 63.2 L773.2 67 M767.5 61.3 L771.5 61.3 M775 61.3 L779 61.3" stroke="#222" stroke-width="1"/>
<ellipse cx="791" cy="61.5" rx="2.8" ry="1.8" fill="#222"/><path d="M793.5 61.5 L797 59.5 L797 63.5 Z" fill="#444"/>
<circle cx="812.2" cy="62" r="3.6" fill="#eee" stroke="#333" stroke-width="1"/><circle cx="812.2" cy="62" r="0.7" fill="#d02020"/>
<path d="M808.5 57 L810 58.5 M816 57 L814.5 58.5" stroke="#333" stroke-width="1"/>
<rect x="829.5" y="57" width="8" height="8" fill="#e8e8e8" stroke="#ccc" stroke-width="0.8"/><rect x="828" y="58.5" width="8" height="8" fill="#fff" stroke="#d0d0d0" stroke-width="0.8"/>
<text x="754.2" y="92.5" font-size="8" fill="#3a3a3a" font-weight="bold" text-anchor="middle">W</text>
<text x="773.9" y="88" font-size="7.6" fill="#3a3a3a" font-weight="bold" text-anchor="middle">1</text>
<text x="782.3" y="88" font-size="7.6" fill="#3a3a3a" font-weight="bold" text-anchor="middle">2</text>
<text x="778" y="96.6" font-size="7.6" fill="#3a3a3a" font-weight="bold" text-anchor="middle">B</text>
<text x="797.8" y="88" font-size="7.6" fill="#3a3a3a" font-weight="bold" text-anchor="middle">1</text>
<text x="806.2" y="88" font-size="7.6" fill="#3a3a3a" font-weight="bold" text-anchor="middle">2</text>
<text x="797.8" y="96.6" font-size="7.6" fill="#3a3a3a" font-weight="bold" text-anchor="middle">3</text>
<text x="806.2" y="96.6" font-size="7.6" fill="#3a3a3a" font-weight="bold" text-anchor="middle">4</text>
<text x="569.2" y="114.3" font-size="7.3" fill="#2e2e2e" font-weight="bold" text-anchor="start" textLength="33.6" lengthAdjust="spacingAndGlyphs">Projection</text>
<text x="615.6" y="114.3" font-size="7.3" fill="#2e2e2e" font-weight="bold" text-anchor="start" textLength="15.2" lengthAdjust="spacingAndGlyphs">Data</text>
<text x="643.4" y="114.3" font-size="7.3" fill="#2e2e2e" font-weight="bold" text-anchor="start" textLength="17.2" lengthAdjust="spacingAndGlyphs">Cuts</text>
<text x="671.8" y="114.3" font-size="7.3" fill="#2e2e2e" font-weight="bold" text-anchor="start" textLength="18.4" lengthAdjust="spacingAndGlyphs">InDet</text>
<text x="702.3" y="114.3" font-size="7.3" fill="#2e2e2e" font-weight="bold" text-anchor="start" textLength="14.6" lengthAdjust="spacingAndGlyphs">Calo</text>
<text x="728.5" y="114.3" font-size="7.3" fill="#2e2e2e" font-weight="bold" text-anchor="start" textLength="30" lengthAdjust="spacingAndGlyphs">MuonDet</text>
<text x="771.2" y="114.3" font-size="7.3" fill="#2e2e2e" font-weight="bold" text-anchor="start" textLength="25.8" lengthAdjust="spacingAndGlyphs">Objects</text>
<text x="810.2" y="114.3" font-size="7.3" fill="#2e2e2e" font-weight="bold" text-anchor="start" textLength="32.8" lengthAdjust="spacingAndGlyphs">Geometry</text>
<text x="578.2" y="128.8" font-size="7.2" fill="#2e2e2e" font-weight="bold" text-anchor="middle">Data</text>
<text x="693.5" y="132.5" font-size="7.4" fill="#3a3a3a" text-anchor="middle">Name</text>
<text x="892" y="132.5" font-size="7.4" fill="#3a3a3a" text-anchor="middle">Value</text>
<line x1="598.2" y1="147" x2="598.2" y2="199.5" stroke="#a8b4c8" stroke-width="0.6"/>
<rect x="596.3" y="138.5" width="7.2" height="7.4" fill="#cfdcea" stroke="#7c8a98" stroke-width="0.8"/>
<path d="M597.8 142.4 l1.3 2.2 l2.8 -4" fill="none" stroke="#1a1a1a" stroke-width="1.1"/>
<text x="606.7" y="145" font-size="7.2" fill="#1e1e1e" font-weight="bold" text-anchor="start">Status</text>
<circle cx="598.2" cy="156.6" r="1.5" fill="#cdd" stroke="#5a78c0" stroke-width="0.8"/>
<line x1="599.7" y1="156.6" x2="603" y2="156.6" stroke="#5a78c0" stroke-width="0.8"/>
<rect x="608.2" y="153.1" width="7.2" height="7.4" fill="#cfdcea" stroke="#7c8a98" stroke-width="0.8"/>
<path d="M609.7 157 l1.3 2.2 l2.8 -4" fill="none" stroke="#1a1a1a" stroke-width="1.1"/>
<text x="618" y="159.2" font-size="7.2" fill="#1e1e1e" font-weight="bold" text-anchor="start">InDet</text>
<circle cx="598.2" cy="170.9" r="1.5" fill="#cdd" stroke="#5a78c0" stroke-width="0.8"/>
<line x1="599.7" y1="170.9" x2="603" y2="170.9" stroke="#5a78c0" stroke-width="0.8"/>
<rect x="608.2" y="167.4" width="7.2" height="7.4" fill="#cfdcea" stroke="#7c8a98" stroke-width="0.8"/>
<path d="M609.7 171.3 l1.3 2.2 l2.8 -4" fill="none" stroke="#1a1a1a" stroke-width="1.1"/>
<text x="618" y="173.5" font-size="7.2" fill="#1e1e1e" font-weight="bold" text-anchor="start">Calo</text>
<circle cx="598.2" cy="185.2" r="1.5" fill="#cdd" stroke="#5a78c0" stroke-width="0.8"/>
<line x1="599.7" y1="185.2" x2="603" y2="185.2" stroke="#5a78c0" stroke-width="0.8"/>
<rect x="608.2" y="181.7" width="7.2" height="7.4" fill="#cfdcea" stroke="#7c8a98" stroke-width="0.8"/>
<path d="M609.7 185.6 l1.3 2.2 l2.8 -4" fill="none" stroke="#1a1a1a" stroke-width="1.1"/>
<text x="618" y="187.8" font-size="7.2" fill="#1e1e1e" font-weight="bold" text-anchor="start">MuonDet</text>
<circle cx="598.2" cy="199.5" r="1.5" fill="#cdd" stroke="#5a78c0" stroke-width="0.8"/>
<line x1="599.7" y1="199.5" x2="603" y2="199.5" stroke="#5a78c0" stroke-width="0.8"/>
<rect x="608.2" y="196" width="7.2" height="7.4" fill="#cfdcea" stroke="#7c8a98" stroke-width="0.8"/>
<path d="M609.7 199.9 l1.3 2.2 l2.8 -4" fill="none" stroke="#1a1a1a" stroke-width="1.1"/>
<text x="618" y="202.1" font-size="7.2" fill="#1e1e1e" font-weight="bold" text-anchor="start">Objects</text>
<path d="M563.5 402.5 L566 399.5 L568.5 402.5 Z" fill="#5070a8"/>
<path d="M570.5 399.5 L575.5 399.5 L573 402.5 Z" fill="#5070a8"/>
</svg>
</body></html>
